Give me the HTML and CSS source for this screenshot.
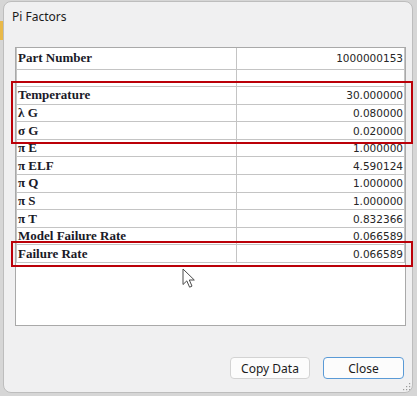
FILE: index.html
```html
<!DOCTYPE html>
<html>
<head>
<meta charset="utf-8">
<link rel="stylesheet" href="styles.css">
</head>
<body>
<div class="stage">
  <div class="edge-mark"></div>
  <div class="dialog">
    <div class="titlebar">Pi Factors</div>
    <div class="panel">
      <table class="grid">
        <colgroup><col class="c1"><col class="c2"></colgroup>
        <tr class="first"><th>Part Number</th><td>1000000153</td></tr>
        <tr><th></th><td></td></tr>
        <tr><th>Temperature</th><td>30.000000</td></tr>
        <tr><th>λ G</th><td>0.080000</td></tr>
        <tr><th>σ G</th><td>0.020000</td></tr>
        <tr><th>π E</th><td>1.000000</td></tr>
        <tr><th>π ELF</th><td>4.590124</td></tr>
        <tr><th>π Q</th><td>1.000000</td></tr>
        <tr><th>π S</th><td>1.000000</td></tr>
        <tr><th>π T</th><td>0.832366</td></tr>
        <tr><th>Model Failure Rate</th><td>0.066589</td></tr>
        <tr><th>Failure Rate</th><td>0.066589</td></tr>
      </table>
    </div>
    <div class="footer">
      <button class="btn">Copy Data</button>
      <button class="btn btn-default">Close</button>
    </div>
    <div class="grip">
      <svg width="8" height="8" viewBox="0 0 8 8"><g fill="#9a9a9a"><rect x="6" y="0" width="1.2" height="1.2"/><rect x="3" y="3" width="1.2" height="1.2"/><rect x="6" y="3" width="1.2" height="1.2"/><rect x="0" y="6" width="1.2" height="1.2"/><rect x="3" y="6" width="1.2" height="1.2"/><rect x="6" y="6" width="1.2" height="1.2"/></g></svg>
    </div>
  </div>
  <div class="mark mark-a"></div>
  <div class="mark mark-b"></div>
  <svg class="cursor" width="14" height="21" viewBox="0 0 14 21">
    <path d="M1 1 L1 16.5 L4.8 12.9 L7.6 19.2 L10 18.1 L7.3 12 L12.3 12 Z" fill="#ffffff" stroke="#4a4a4a" stroke-width="1" stroke-linejoin="round"/>
  </svg>
</div>
</body>
</html>
```
FILE: styles.css
```css
html, body {
  margin: 0;
  padding: 0;
}
body {
  background: #d6d6d6;
  width: 417px;
  height: 396px;
  overflow: hidden;
}
.stage {
  position: relative;
  width: 417px;
  height: 396px;
  padding: 1px 0 0 3px;
  box-sizing: border-box;
}
.edge-mark {
  position: absolute;
  left: 0;
  top: 21px;
  width: 3px;
  height: 19px;
  background: #e9b949;
}
.dialog {
  position: relative;
  width: 410px;
  height: 392px;
  box-sizing: border-box;
  border: 1px solid #bdbdbd;
  border-radius: 8px;
  background: #f0f0f1;
  display: flex;
  flex-direction: column;
}
.titlebar {
  height: 30px;
  line-height: 30px;
  padding-left: 8px;
  font-family: "Noto Sans", "Open Sans", sans-serif;
  font-size: 12px;
  color: #1b1b1b;
}
.panel {
  margin: 15px 6px 0 11px;
  height: 279px;
  box-sizing: border-box;
  border: 1px solid #a9a9a9;
  background: #ffffff;
}
.grid {
  border-collapse: collapse;
  width: 388px;
  table-layout: fixed;
}
.c1 { width: 220px; }
.c2 { width: 168px; }
.grid tr {
  height: 17.6px;
}
.grid tr.first {
  height: 21px;
}
.grid th, .grid td {
  padding: 0 1px 0 1px;
  border: 1px solid #c4c4c4;
  border-top: none;
  white-space: nowrap;
  overflow: hidden;
}
.grid th {
  text-align: left;
  font-family: "Liberation Serif", "Times New Roman", serif;
  font-weight: bold;
  font-size: 13px;
  color: #1a1a28;
}
.grid td {
  text-align: right;
  font-family: "DejaVu Sans", Verdana, sans-serif;
  font-size: 10.5px;
  color: #262626;
}
.footer {
  display: flex;
  justify-content: flex-end;
  gap: 13px;
  margin-top: 31px;
  padding-right: 8px;
}
.btn {
  width: 80px;
  height: 22px;
  box-sizing: border-box;
  border: 1px solid #d3d3d3;
  border-radius: 4px;
  background: #fcfcfc;
  font-family: "Noto Sans", "Open Sans", sans-serif;
  font-size: 12px;
  color: #1b1b1b;
  padding: 0;
}
.btn-default {
  border: 1.5px solid #5a9ad6;
  width: 81px;
}
.grip {
  position: absolute;
  right: 1px;
  bottom: 1px;
  width: 8px;
  height: 8px;
  line-height: 0;
}
.mark {
  position: absolute;
  left: 11px;
  width: 402px;
  box-sizing: border-box;
  border: 2px solid #bb0008;
}
.mark-a {
  top: 81px;
  height: 63px;
}
.mark-b {
  top: 241px;
  height: 26px;
}
.cursor {
  position: absolute;
  left: 182px;
  top: 268px;
}
```
